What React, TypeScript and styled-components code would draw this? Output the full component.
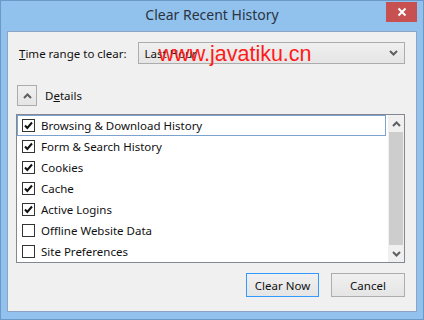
import styled, { createGlobalStyle } from 'styled-components';

const GlobalStyle = createGlobalStyle`
  html, body {
    margin: 0;
    padding: 0;
    background: #ffffff;
  }
  body {
    font-family: 'Noto Sans', 'Open Sans', sans-serif;
  }
`;

const items = [
  { label: 'Browsing & Download History', checked: true, focused: true },
  { label: 'Form & Search History', checked: true },
  { label: 'Cookies', checked: true },
  { label: 'Cache', checked: true },
  { label: 'Active Logins', checked: true },
  { label: 'Offline Website Data', checked: false },
  { label: 'Site Preferences', checked: false },
];

const Chevron = ({ up }: { up?: boolean }) => (
  <svg width='9' height='6' viewBox='0 0 9 6'>
    <path d={up ? 'M1 5 L4.5 1.5 L8 5' : 'M1 1 L4.5 4.5 L8 1'} fill='none' stroke='#5f5f5f' strokeWidth='2' />
  </svg>
);

const CheckMark = () => (
  <svg width='11' height='11' viewBox='0 0 11 11'>
    <path d='M2 5.5 L4.3 8 L9 2.5' fill='none' stroke='#111' strokeWidth='2' />
  </svg>
);

export default function App() {
  return (
    <>
      <GlobalStyle />
      <Window>
        <TitleBar>
          <span />
          <Title>Clear Recent History</Title>
          <CloseButton>
            <svg width='10' height='10' viewBox='0 0 10 10'>
              <path d='M1.5 1.5 L8.5 8.5 M8.5 1.5 L1.5 8.5' stroke='#ffffff' strokeWidth='2' />
            </svg>
          </CloseButton>
        </TitleBar>

        <Panel>
          <RangeRow>
            <Label>
              <u>T</u>ime range to clear:
            </Label>
            <Combo>
              <ComboText>Last Hour</ComboText>
              <Chevron />
              <Watermark>www.javatiku.cn</Watermark>
            </Combo>
          </RangeRow>

          <DetailsRow>
            <ToggleButton>
              <Chevron up />
            </ToggleButton>
            <Label>
              D<u>e</u>tails
            </Label>
          </DetailsRow>

          <ListBox>
            <ListItems>
              {items.map((item) => (
                <Item key={item.label} focused={item.focused}>
                  <CheckBox>{item.checked && <CheckMark />}</CheckBox>
                  <ItemText>{item.label}</ItemText>
                </Item>
              ))}
            </ListItems>
            <ScrollBar>
              <ScrollArrow>
                <Chevron up />
              </ScrollArrow>
              <ScrollThumb />
              <ScrollArrow>
                <Chevron />
              </ScrollArrow>
            </ScrollBar>
          </ListBox>

          <ButtonRow>
            <DialogButton primary>Clear Now</DialogButton>
            <DialogButton>Cancel</DialogButton>
          </ButtonRow>
        </Panel>
      </Window>
    </>
  );
}

const Window = styled.div`
  box-sizing: border-box;
  width: 424px;
  height: 320px;
  background: #91c2ee;
  border: 1px solid #6b98c9;
  display: flex;
  flex-direction: column;
  padding: 0 6px 7px 6px;
`;

const TitleBar = styled.div`
  height: 30px;
  display: grid;
  grid-template-columns: 1fr auto 1fr;
  align-items: start;
`;

const Title = styled.div`
  font-family: 'Noto Sans', sans-serif;
  font-size: 14px;
  color: #2b3340;
  line-height: 30px;
  margin-top: -1px;
`;

const CloseButton = styled.div`
  justify-self: end;
  margin-top: 1px;
  width: 31px;
  height: 20px;
  background: #c75050;
  display: flex;
  align-items: center;
  justify-content: center;
`;

const Panel = styled.div`
  flex: 1;
  background: #f0f0f0;
  border: 1px solid #8ba4c4;
  display: flex;
  flex-direction: column;
  padding: 10px 11px 0 8px;
`;

const RangeRow = styled.div`
  display: flex;
  align-items: center;
  gap: 11px;
  padding-left: 3px;
`;

const Label = styled.span`
  font-size: 11.5px;
  color: #111;
  white-space: nowrap;
`;

const Combo = styled.div`
  position: relative;
  flex: 1;
  box-sizing: border-box;
  height: 22px;
  border: 1px solid #acacac;
  background: linear-gradient(#f0f0f0, #e5e5e5);
  display: flex;
  align-items: center;
  justify-content: space-between;
  padding: 0 6px 0 6px;
`;

const ComboText = styled.span`
  font-size: 11.5px;
  color: #111;
`;

const Watermark = styled.span`
  position: absolute;
  left: 20px;
  top: -1px;
  font-family: 'Liberation Sans', Arial, sans-serif;
  font-size: 21.5px;
  color: #ff1a1a;
  white-space: nowrap;
  pointer-events: none;
`;

const DetailsRow = styled.div`
  display: flex;
  align-items: center;
  gap: 8px;
  margin-top: 21px;
  padding-left: 1px;
`;

const ToggleButton = styled.div`
  box-sizing: border-box;
  width: 20px;
  height: 21px;
  border: 1px solid #acacac;
  background: linear-gradient(#f0f0f0, #e5e5e5);
  display: flex;
  align-items: center;
  justify-content: center;
`;

const ListBox = styled.div`
  margin-top: 8px;
  box-sizing: border-box;
  height: 149px;
  border: 1px solid #828790;
  background: #ffffff;
  display: flex;
`;

const ListItems = styled.div`
  flex: 1;
  display: flex;
  flex-direction: column;
`;

const Item = styled.div<{ focused?: boolean }>`
  box-sizing: border-box;
  height: 21px;
  flex-shrink: 0;
  display: flex;
  align-items: center;
  gap: 6px;
  padding-left: 4px;
  border: 1px solid ${(p) => (p.focused ? '#7da2ce' : 'transparent')};
  margin-right: 2px;
`;

const CheckBox = styled.div`
  box-sizing: border-box;
  width: 13px;
  height: 13px;
  border: 1px solid #333;
  background: #fff;
  display: flex;
  align-items: center;
  justify-content: center;
`;

const ItemText = styled.span`
  font-size: 11.5px;
  color: #111;
  white-space: nowrap;
`;

const ScrollBar = styled.div`
  width: 16px;
  display: flex;
  flex-direction: column;
  background: #f0f0f0;
`;

const ScrollArrow = styled.div`
  height: 17px;
  display: flex;
  align-items: center;
  justify-content: center;
`;

const ScrollThumb = styled.div`
  flex: 1;
  margin: 0 1px;
  background: #cdcdcd;
`;

const ButtonRow = styled.div`
  display: flex;
  justify-content: flex-end;
  gap: 12px;
  margin-top: 10px;
`;

const DialogButton = styled.div<{ primary?: boolean }>`
  box-sizing: border-box;
  width: ${(p) => (p.primary ? '73px' : '74px')};
  height: 24px;
  border: 1px solid ${(p) => (p.primary ? '#3399ff' : '#adadad')};
  background: linear-gradient(#f0f0f0, #e5e5e5);
  font-size: 11.5px;
  color: #111;
  display: flex;
  align-items: center;
  justify-content: center;
`;
